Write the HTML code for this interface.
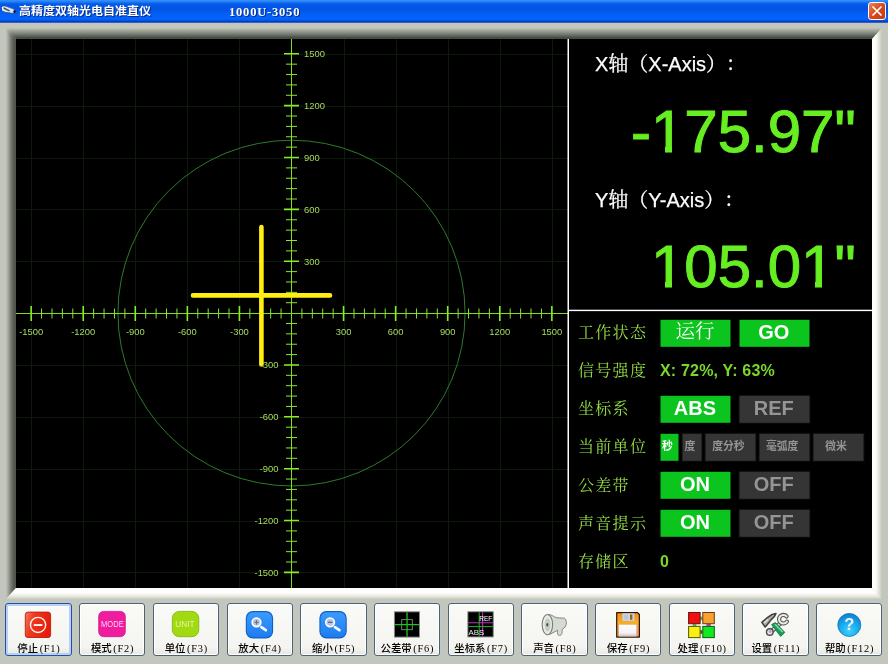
<!DOCTYPE html>
<html lang="zh-CN"><head><meta charset="utf-8"><title>高精度双轴光电自准直仪 1000U-3050</title>
<style>
html,body{margin:0;padding:0}
body{width:888px;height:664px;position:relative;overflow:hidden;background:#c2c6bd;font-family:"Liberation Sans","Noto Sans CJK SC",sans-serif}
.abs{position:absolute}
#root{position:absolute;left:0;top:0;width:888px;height:664px;will-change:transform}
#title{left:0;top:0;width:888px;height:23px;background:linear-gradient(#3894ff 0,#2482f8 1.5px,#0459e8 4px,#0254e4 9px,#025cf0 13px,#0264fc 17px,#0260f8 20px,#0440c8 21.3px,#0638b8 22.2px,#88a4c4 23px)}
#title .t{position:absolute;top:3px;height:16px;line-height:16px;font-size:12px;font-weight:bold;color:#fff;white-space:nowrap;font-family:"Liberation Sans","Noto Sans CJK SC",sans-serif;text-shadow:1px 1px 0 #0a2a80}
#close{left:868px;top:2px;width:16px;height:16px;border:1px solid #fff;border-radius:3px;background:linear-gradient(135deg,#e8835c,#d84a1c 50%,#c23a10)}
#black{left:16px;top:39px;width:856px;height:549px;background:#000}
.lab{position:absolute;white-space:nowrap;color:#fff;-webkit-text-stroke:0.25px #fff;font-size:20px;line-height:24px;text-spacing-trim:space-all;font-family:"Liberation Sans","Noto Serif CJK SC",sans-serif}
.val{position:absolute;white-space:nowrap;color:#66ee22;font-size:60px;line-height:60px;text-align:right;font-family:"Liberation Sans",sans-serif;-webkit-text-stroke:1px #66ee22}
.row{position:absolute;left:578px;margin-top:-1.3px;white-space:nowrap;color:#96e044;font-size:16px;line-height:27px;height:27px;letter-spacing:1.3px;font-family:"Liberation Serif","Noto Serif CJK SC",serif}
.btn{position:absolute;height:27px;line-height:24px;text-align:center;box-sizing:border-box;padding-right:2px;transform:translate(0.5px,-0.2px);font-weight:bold;font-size:20px;color:#fff;background:#0cc41e;font-family:"Liberation Sans","Noto Sans CJK SC",sans-serif;white-space:nowrap}
.btn.off{background:#353535;color:#959595;box-shadow:0 0 0 1px #0c0c0c}
.btn.sm{font-size:10.8px;font-weight:bold;line-height:25.4px;height:27.8px;padding-right:5px}
.btn.cn{font-weight:normal;font-size:19.5px;line-height:23.5px;font-family:"Liberation Serif","Noto Serif CJK SC",serif}
.txt{position:absolute;white-space:nowrap;color:#7ad82a;font-weight:bold;font-size:16px;letter-spacing:0.18px;line-height:26px;height:27px;font-family:"Liberation Sans",sans-serif}
.tb{position:absolute;top:603.4px;width:64.4px;height:50.4px;border:1px solid #50626e;border-radius:3px;background:linear-gradient(#fafaf8,#f4f4f0 85%,#e8e7e0);box-shadow:inset 0 0 0 1px #fff,0 0 0 1px rgba(190,202,208,.55)}
.tb .ic{position:absolute;left:19px;top:8px;width:26px;height:26px}
.tb .cap{position:absolute;left:-10px;width:85px;top:37.2px;font-weight:500;height:14px;line-height:14px;text-align:center;font-size:10.4px;color:#000;white-space:nowrap;font-family:"Liberation Serif","Noto Sans CJK SC",serif}
.tb .cap .en{letter-spacing:0.75px;margin-left:1.6px}
</style></head><body><div id="root">

<div id="title" class="abs">
<svg class="abs" style="left:0px;top:3px" width="18" height="14" viewBox="0 3 18 14"><path d="M1.8 7.2C2.2 5.8 4 5.6 6 6.2L12.5 8.6C14.6 9.4 16 10.6 15.6 12C15.2 13.2 13 13.4 10.5 13L5 12.2C2.8 11.6 1.4 9 1.8 7.2Z" fill="#d8e4f0" stroke="#2a4a9a" stroke-width="0.7"/><path d="M4 8.2L9 10.6" stroke="#3a5a5a" stroke-width="1.6" stroke-linecap="round"/><ellipse cx="14.6" cy="11.6" rx="1.3" ry="1.5" fill="#101830"/><path d="M2.4 7.4L3 10.4" stroke="#fff" stroke-width="1.2" stroke-linecap="round"/></svg>
<div class="t" style="left:19px;transform:scaleY(0.92);top:3.3px">高精度双轴光电自准直仪</div>
<div class="t" style="left:229px;letter-spacing:0.8px;font-family:&quot;Liberation Serif&quot;,serif;font-size:12.5px;top:3.5px">1000U-3050</div>
<div id="close" class="abs"><svg width="16" height="16" viewBox="0 0 16 16"><path d="M4 4 L12 12 M12 4 L4 12" stroke="#fff" stroke-width="1.7" stroke-linecap="round"/></svg></div>
</div>
<div class="abs" style="left:6px;top:28px;width:876px;height:11px;background:linear-gradient(#c1c5bc 0,#a8ac9c 18%,#848a82 45%,#646a61 68%,#4a4e46 86%,#454941 100%);clip-path:polygon(0 0,100% 0,866px 100%,10px 100%)"></div>
<div class="abs" style="left:6px;top:28px;width:10px;height:571px;background:linear-gradient(90deg,#c1c5bc 0,#9ea19a 25%,#767871 50%,#55574f 80%,#52544d 100%);clip-path:polygon(0 0,100% 11px,100% 560px,0 100%)"></div>
<div class="abs" style="left:872px;top:28px;width:10px;height:571px;background:linear-gradient(90deg,#ffffff 0,#fbfcf8 40%,#dfe2da 70%,#c2c6bd 100%);clip-path:polygon(0 11px,100% 0,100% 100%,0 560px)"></div>
<div class="abs" style="left:6px;top:588px;width:876px;height:11px;background:linear-gradient(#ffffff 0,#fdfdfb 45%,#e8e9de 75%,#c8ccc4 100%);clip-path:polygon(10px 0,866px 0,100% 100%,0 100%)"></div>

<div id="black" class="abs"></div>
<svg class="abs" style="left:16px;top:39px" width="552" height="549" viewBox="16 39 552 549" font-family="Liberation Sans, sans-serif">
<path d="M31.5 39V588M16 572.5H568M83.5 39V588M16 521.5H568M135.5 39V588M16 469.5H568M187.5 39V588M16 417.5H568M239.5 39V588M16 365.5H568M344.5 39V588M16 261.5H568M396.5 39V588M16 209.5H568M448.5 39V588M16 158.5H568M500.5 39V588M16 106.5H568M552.5 39V588M16 54.5H568" stroke="#0d190b" stroke-width="1" fill="none"/>
<ellipse cx="291.5" cy="313.1" rx="173.57" ry="172.87" fill="none" stroke="#2c7c2c" stroke-width="1"/>
<path d="M16 313.5H568M291.5 39V588" stroke="#7be024" stroke-width="1" fill="none"/>
<path d="M41.56 308.5V318.5M286 562.03H297M51.98 308.5V318.5M286 551.66H297M62.39 308.5V318.5M286 541.28H297M72.81 308.5V318.5M286 530.91H297M93.63 308.5V318.5M286 510.17H297M104.05 308.5V318.5M286 499.8H297M114.46 308.5V318.5M286 489.42H297M124.88 308.5V318.5M286 479.05H297M145.7 308.5V318.5M286 458.31H297M156.12 308.5V318.5M286 447.94H297M166.53 308.5V318.5M286 437.56H297M176.95 308.5V318.5M286 427.19H297M197.77 308.5V318.5M286 406.45H297M208.19 308.5V318.5M286 396.08H297M218.6 308.5V318.5M286 385.7H297M229.02 308.5V318.5M286 375.33H297M249.84 308.5V318.5M286 354.59H297M260.26 308.5V318.5M286 344.22H297M270.67 308.5V318.5M286 333.84H297M281.09 308.5V318.5M286 323.47H297M301.91 308.5V318.5M286 302.73H297M312.33 308.5V318.5M286 292.36H297M322.74 308.5V318.5M286 281.98H297M333.16 308.5V318.5M286 271.61H297M353.98 308.5V318.5M286 250.87H297M364.4 308.5V318.5M286 240.5H297M374.81 308.5V318.5M286 230.12H297M385.23 308.5V318.5M286 219.75H297M406.05 308.5V318.5M286 199.01H297M416.47 308.5V318.5M286 188.64H297M426.88 308.5V318.5M286 178.26H297M437.3 308.5V318.5M286 167.89H297M458.12 308.5V318.5M286 147.15H297M468.54 308.5V318.5M286 136.78H297M478.95 308.5V318.5M286 126.4H297M489.37 308.5V318.5M286 116.03H297M510.19 308.5V318.5M286 95.29H297M520.61 308.5V318.5M286 84.92H297M531.02 308.5V318.5M286 74.54H297M541.44 308.5V318.5M286 64.17H297" stroke="#8ae62e" stroke-width="1" fill="none"/>
<path d="M31.15 306V321M284 572.4H299M83.22 306V321M284 520.54H299M135.29 306V321M284 468.68H299M187.36 306V321M284 416.82H299M239.43 306V321M284 364.96H299M343.57 306V321M284 261.24H299M395.64 306V321M284 209.38H299M447.71 306V321M284 157.52H299M499.78 306V321M284 105.66H299M551.85 306V321M284 53.8H299" stroke="#84f020" stroke-width="1.6" fill="none"/>
<path d="M193 295.4H330M261.4 227V364.5" stroke="#ffee10" stroke-width="4.6" stroke-linecap="round" fill="none"/>
<g fill="#a6dc5c" font-size="9.4">
<text x="31.15" y="335.2" text-anchor="middle">-1500</text>
<text x="278.5" y="575.8" text-anchor="end">-1500</text>
<text x="83.22" y="335.2" text-anchor="middle">-1200</text>
<text x="278.5" y="523.94" text-anchor="end">-1200</text>
<text x="135.29" y="335.2" text-anchor="middle">-900</text>
<text x="278.5" y="472.08" text-anchor="end">-900</text>
<text x="187.36" y="335.2" text-anchor="middle">-600</text>
<text x="278.5" y="420.22" text-anchor="end">-600</text>
<text x="239.43" y="335.2" text-anchor="middle">-300</text>
<text x="278.5" y="368.36" text-anchor="end">-300</text>
<text x="343.57" y="335.2" text-anchor="middle">300</text>
<text x="304" y="264.64">300</text>
<text x="395.64" y="335.2" text-anchor="middle">600</text>
<text x="304" y="212.78">600</text>
<text x="447.71" y="335.2" text-anchor="middle">900</text>
<text x="304" y="160.92">900</text>
<text x="499.78" y="335.2" text-anchor="middle">1200</text>
<text x="304" y="109.06">1200</text>
<text x="551.85" y="335.2" text-anchor="middle">1500</text>
<text x="304" y="57.2">1500</text>
</g>
</svg>
<div class="abs" style="left:567px;top:39px;width:1px;height:549px;background:rgba(255,255,255,.5)"></div><div class="abs" style="left:568px;top:39px;width:1px;height:549px;background:#fff"></div>
<div class="abs" style="left:568px;top:309px;width:304px;height:1px;background:rgba(255,255,255,.3)"></div><div class="abs" style="left:568px;top:310px;width:304px;height:1px;background:#fff"></div><div class="abs" style="left:568px;top:311px;width:304px;height:1px;background:rgba(255,255,255,.12)"></div>
<div class="lab" style="left:595px;top:52px">X轴（X-Axis）：</div>
<div class="val" style="right:32.25px;top:102.2px">-175.97"</div>
<div class="lab" style="left:595px;top:188px">Y轴（Y-Axis）：</div>
<div class="val" style="right:32.25px;top:237.2px">105.01"</div>
<div class="abs" style="left:653px;top:145.8px;width:12.25px;height:8px;background:#000"></div>
<div class="abs" style="left:671.75px;top:145.8px;width:11px;height:8px;background:#000"></div>
<div class="abs" style="left:653px;top:280.8px;width:12.25px;height:8px;background:#000"></div>
<div class="abs" style="left:671.75px;top:280.8px;width:11px;height:8px;background:#000"></div>
<div class="abs" style="left:803px;top:280.8px;width:12.25px;height:8px;background:#000"></div>
<div class="abs" style="left:821.75px;top:280.8px;width:11px;height:8px;background:#000"></div>
<div class="row" style="top:320px">工作状态</div>
<div class="row" style="top:358.2px">信号强度</div>
<div class="row" style="top:396.4px">坐标系</div>
<div class="row" style="top:434.6px">当前单位</div>
<div class="row" style="top:472.8px">公差带</div>
<div class="row" style="top:511px">声音提示</div>
<div class="row" style="top:549.2px">存储区</div>
<div class="btn cn" style="left:660.4px;top:320px;width:70px">运行</div>
<div class="btn " style="left:739.3px;top:320px;width:70px">GO</div>
<div class="txt" style="left:660px;top:358px">X: 72%, Y: 63%</div>
<div class="btn " style="left:660.4px;top:396px;width:70px">ABS</div>
<div class="btn off" style="left:739.3px;top:396px;width:70px">REF</div>
<div class="btn sm" style="left:660.4px;top:433.5px;width:18px">秒</div>
<div class="btn sm off" style="left:682.4px;top:433.5px;width:19px">度</div>
<div class="btn sm off" style="left:705.4px;top:433.5px;width:50px">度分秒</div>
<div class="btn sm off" style="left:759.2px;top:433.5px;width:50px">毫弧度</div>
<div class="btn sm off" style="left:813px;top:433.5px;width:50px">微米</div>
<div class="btn " style="left:660.4px;top:472px;width:70px">ON</div>
<div class="btn off" style="left:739.3px;top:472px;width:70px">OFF</div>
<div class="btn " style="left:660.4px;top:510px;width:70px">ON</div>
<div class="btn off" style="left:739.3px;top:510px;width:70px">OFF</div>
<div class="txt" style="left:660px;top:549px">0</div>
<div class="tb" style="left:5.4px;border-color:#24509c;box-shadow:inset 0 0 0 2px #b8d0f8,0 0 0 1px rgba(190,202,208,.55)"><div class="cap">停止<span class="en">(F1)</span></div></div>
<svg class="abs" style="left:18px;top:606px" width="40" height="36" viewBox="0 0 40 36"><defs><linearGradient id="g0" x1="0" y1="0" x2="1" y2="0.3"><stop offset="0" stop-color="#f47a64"/><stop offset="0.35" stop-color="#ee3a20"/><stop offset="1" stop-color="#e81c08"/></linearGradient></defs><rect x="7.3" y="6.1" width="25.3" height="25.4" rx="2.6" fill="url(#g0)" stroke="#b8200c" stroke-width="0.9"/><circle cx="20.05" cy="18.95" r="7.6" fill="none" stroke="#fff4ec" stroke-width="1.4"/><path d="M15.8 19.05H24.4" stroke="#fff" stroke-width="1.8"/></svg>
<div class="tb" style="left:79.1px"><div class="cap">模式<span class="en">(F2)</span></div></div>
<svg class="abs" style="left:92px;top:606px" width="40" height="36" viewBox="0 0 40 36"><rect x="6.7" y="5.4" width="26.6" height="25.3" rx="5" fill="#f01c9e" stroke="#d0148a" stroke-width="0.8"/><text x="20.4" y="21" font-size="8.2" fill="#ffd0f4" text-anchor="middle" textLength="22.6" lengthAdjust="spacingAndGlyphs" font-family="Liberation Sans, sans-serif">MODE</text></svg>
<div class="tb" style="left:152.8px"><div class="cap">单位<span class="en">(F3)</span></div></div>
<svg class="abs" style="left:166px;top:606px" width="40" height="36" viewBox="0 0 40 36"><rect x="6.3" y="5.4" width="26.5" height="25.3" rx="7" fill="#a2da12" stroke="#86b818" stroke-width="0.9"/><text x="19" y="20.9" font-size="8.4" fill="#dcf8a0" text-anchor="middle" textLength="19.4" lengthAdjust="spacingAndGlyphs" font-family="Liberation Sans, sans-serif">UNIT</text></svg>
<div class="tb" style="left:226.5px"><div class="cap">放大<span class="en">(F4)</span></div></div>
<svg class="abs" style="left:240px;top:606px" width="40" height="36" viewBox="0 0 40 36"><defs><linearGradient id="gm1" x1="0" y1="0" x2="0" y2="1"><stop offset="0" stop-color="#3c9cfc"/><stop offset="1" stop-color="#1c7cf0"/></linearGradient></defs><rect x="6.35" y="5.6" width="26.2" height="26.3" rx="6.5" fill="url(#gm1)" stroke="#1060c4" stroke-width="1.1"/><path d="M21.30 21.2L25.80 24.2" stroke="#fff" stroke-width="2.6" stroke-linecap="round"/><circle cx="16.50" cy="16.3" r="4.3" fill="#b8c4d8" stroke="#fff" stroke-width="1.7"/><path d="M14.40 16.3H18.60M16.50 14.2V18.4" stroke="#5c6c8c" stroke-width="1.1"/></svg>
<div class="tb" style="left:300.2px"><div class="cap">缩小<span class="en">(F5)</span></div></div>
<svg class="abs" style="left:313px;top:606px" width="40" height="36" viewBox="0 0 40 36"><defs><linearGradient id="gm0" x1="0" y1="0" x2="0" y2="1"><stop offset="0" stop-color="#3c9cfc"/><stop offset="1" stop-color="#1c7cf0"/></linearGradient></defs><rect x="6.95" y="5.6" width="26.2" height="26.3" rx="6.5" fill="url(#gm0)" stroke="#1060c4" stroke-width="1.1"/><path d="M21.90 21.2L26.40 24.2" stroke="#fff" stroke-width="2.6" stroke-linecap="round"/><circle cx="17.10" cy="16.3" r="4.3" fill="#b8c4d8" stroke="#fff" stroke-width="1.7"/><path d="M14.80 16.3H19.40" stroke="#4a6aa0" stroke-width="1.3"/></svg>
<div class="tb" style="left:373.9px"><div class="cap">公差带<span class="en">(F6)</span></div></div>
<svg class="abs" style="left:387px;top:606px" width="40" height="36" viewBox="0 0 40 36"><rect x="7.4" y="5.8" width="25.1" height="25.3" fill="#000" stroke="#8a8a8a" stroke-width="0.9"/><rect x="14.7" y="13.6" width="10.6" height="10.1" fill="none" stroke="#6c9c6c" stroke-width="0.9"/><path d="M8 18.7H32.3M20.05 6.2V30.8" stroke="#1fc01f" stroke-width="1.3"/></svg>
<div class="tb" style="left:447.6px"><div class="cap">坐标系<span class="en">(F7)</span></div></div>
<svg class="abs" style="left:461px;top:606px" width="40" height="36" viewBox="0 0 40 36"><rect x="6.9" y="5.8" width="25.3" height="25.1" fill="#000" stroke="#7c807c" stroke-width="0.9"/><path d="M7.3 16.8H31.8M21.6 6.2V30.5" stroke="#c030c0" stroke-width="1.1"/><path d="M7.3 20.6H31.8M18.2 6.2V30.5" stroke="#28b428" stroke-width="1"/><text x="24.7" y="14.6" font-size="7.6" fill="#fff" text-anchor="middle" textLength="13" lengthAdjust="spacingAndGlyphs" font-family="Liberation Sans, sans-serif">REF</text><text x="15.4" y="29" font-size="7.6" fill="#f0e8f0" text-anchor="middle" textLength="15.7" lengthAdjust="spacingAndGlyphs" font-family="Liberation Sans, sans-serif">ABS</text></svg>
<div class="tb" style="left:521.3px"><div class="cap">声音<span class="en">(F8)</span></div></div>
<svg class="abs" style="left:534px;top:606px" width="40" height="36" viewBox="0 0 40 36"><path d="M14 8.6C17.5 8 19.5 11 23 11.8L30.5 12.2C33 13.5 33 20.5 30 22L28.2 23.2C28.6 26.5 27.6 29.6 25.6 29.6C23.6 29.6 23.2 27 23.6 24.2L18 27.2C16 28.6 13.5 29 12 28.6Z" fill="#d6dad2" stroke="#86887e" stroke-width="1"/><ellipse cx="13.4" cy="18.6" rx="5.2" ry="10.1" fill="#e8ece6" stroke="#7c7e76" stroke-width="1.1"/><ellipse cx="13.6" cy="18.8" rx="3" ry="6.6" fill="#c4ccc4"/><ellipse cx="13.3" cy="18.8" rx="1.1" ry="1.7" fill="#4a5248"/></svg>
<div class="tb" style="left:595px"><div class="cap">保存<span class="en">(F9)</span></div></div>
<svg class="abs" style="left:608px;top:606px" width="40" height="36" viewBox="0 0 40 36"><defs><linearGradient id="g8" x1="0" y1="0" x2="0" y2="1"><stop offset="0" stop-color="#f08a28"/><stop offset="0.42" stop-color="#f8b020"/><stop offset="0.5" stop-color="#f0a050"/><stop offset="1" stop-color="#e89868"/></linearGradient><linearGradient id="g8b" x1="0" y1="0" x2="0" y2="1"><stop offset="0" stop-color="#ffffff"/><stop offset="0.7" stop-color="#f4f0f4"/><stop offset="1" stop-color="#c8c4c8"/></linearGradient></defs><path d="M8.7 6.7H29.6L31.4 8.5V31.1H8.7Z" fill="url(#g8)" stroke="#2c1404" stroke-width="1.2" stroke-linejoin="round"/><rect x="14.4" y="7.3" width="12" height="7.6" fill="#cfd4e4"/><rect x="22" y="8.4" width="2.4" height="5.4" fill="#8a6a20"/><rect x="16" y="9" width="4.2" height="4.4" fill="#b8c4e0"/><rect x="10.9" y="18.7" width="17.5" height="11.8" fill="url(#g8b)"/></svg>
<div class="tb" style="left:668.7px"><div class="cap">处理<span class="en">(F10)</span></div></div>
<svg class="abs" style="left:682px;top:606px" width="40" height="36" viewBox="0 0 40 36"><rect x="18.2" y="10.6" width="2.2" height="3.6" fill="#38b060"/><rect x="10.6" y="17.6" width="3.8" height="2.6" fill="#58c048"/><rect x="24.4" y="17.6" width="4.4" height="2.6" fill="#c040b0"/><rect x="18.2" y="24.2" width="2.2" height="3.6" fill="#4c4c10"/><rect x="6.60" y="6.50" width="11.5" height="11.2" fill="#f01010" stroke="#701010" stroke-width="1"/><rect x="20.80" y="6.50" width="11.5" height="11.2" fill="#f8a030" stroke="#6c3c10" stroke-width="1"/><rect x="6.60" y="20.40" width="11.5" height="11.2" fill="#f8f010" stroke="#54540c" stroke-width="1"/><rect x="20.80" y="20.40" width="11.5" height="11.2" fill="#10e820" stroke="#0c5c10" stroke-width="1"/></svg>
<div class="tb" style="left:742.4px"><div class="cap">设置<span class="en">(F11)</span></div></div>
<svg class="abs" style="left:755px;top:606px" width="40" height="36" viewBox="0 0 40 36"><path d="M25 17.6L15.6 26.2" stroke="#5a5a56" stroke-width="4.6" stroke-linecap="round"/><path d="M25 17.6L15.6 26.2" stroke="#deded8" stroke-width="2.4" stroke-linecap="round"/><path d="M31.6 10.4A4.3 4.3 0 1 0 31.9 15.6" fill="none" stroke="#55554f" stroke-width="4.2" stroke-linecap="round"/><path d="M31.6 10.4A4.3 4.3 0 1 0 31.9 15.6" fill="none" stroke="#ecece8" stroke-width="2" stroke-linecap="round"/><circle cx="14.8" cy="26" r="3.3" fill="#e4e0ec" stroke="#4c4c48" stroke-width="1.4"/><circle cx="15.2" cy="25.6" r="1.4" fill="#a8a0c4"/><path d="M16.6 18.6L20.4 16.6L29.8 26.4L25.6 30.4Z" fill="#1c9c54" stroke="#167844" stroke-width="0.9" stroke-linejoin="round"/><path d="M20 18.2L27.6 26" stroke="#84e0ac" stroke-width="1.3"/><path d="M6.8 16.4L11.6 12.2L16.4 8.8L21 7.4L19.6 10.2L16.2 13.6L13.6 17L10.2 21Z" fill="#aeaea8" stroke="#3e3e3a" stroke-width="1.5" stroke-linejoin="round"/><path d="M9 17L13 13.5" stroke="#e4e4e0" stroke-width="1.2"/></svg>
<div class="tb" style="left:816.1px"><div class="cap">帮助<span class="en">(F12)</span></div></div>
<svg class="abs" style="left:829px;top:606px" width="40" height="36" viewBox="0 0 40 36"><defs><radialGradient id="g11" cx="0.5" cy="0.75" r="0.8"><stop offset="0" stop-color="#3cd4fc"/><stop offset="0.55" stop-color="#18a4ec"/><stop offset="1" stop-color="#0c78c4"/></radialGradient></defs><circle cx="20.3" cy="18.95" r="11.5" fill="url(#g11)" stroke="#0c74bc" stroke-width="0.8"/><text x="20.3" y="24" font-size="16.5" font-weight="bold" fill="#f4f0fc" text-anchor="middle" font-family="Liberation Sans, sans-serif">?</text></svg>
</div></body></html>
